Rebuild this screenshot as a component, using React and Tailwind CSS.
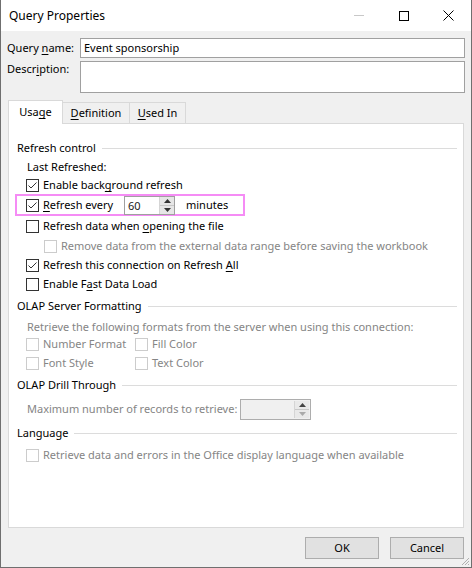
import React from 'react';

const font = { fontFamily: '"Noto Sans", "Segoe UI", Arial, sans-serif' };

const Check = ({ checked, disabled }) => (
  <span
    className={`w-[13px] h-[13px] shrink-0 border bg-white flex items-center justify-center ${
      disabled ? 'border-[#cccccc]' : 'border-[#333333]'
    }`}>
    {checked && (
      <svg width="11" height="11" viewBox="0 0 11 11">
        <path d="M1.5 5.5 L4 8 L9.5 2.5" fill="none" stroke="#333" strokeWidth="1" />
      </svg>
    )}
  </span>
);

const U = ({ children }) => <span className="underline underline-offset-2">{children}</span>;

const GroupHeader = ({ title, h }) => (
  <div className={`flex items-center pl-[8px] pr-[6px] ${h}`}>
    <span className="text-black whitespace-nowrap">{title}</span>
    <div className="flex-1 h-px bg-[#dcdcdc] ml-[6px]" />
  </div>
);

const CheckRow = ({ label, checked, disabled, h, indent = 'pl-[17px]' }) => (
  <div className={`flex items-center gap-[4px] whitespace-nowrap ${h} ${indent}`}>
    <Check checked={checked} disabled={disabled} />
    <span className={disabled ? 'text-[#858585]' : 'text-black'}>{label}</span>
  </div>
);

const Spin = ({ disabled }) => (
  <div className="w-[15px] h-full flex flex-col border-l border-[#d5d5d5]">
    <div className={`flex-1 flex items-center justify-center ${disabled ? 'bg-[#e9e9e9]' : 'bg-[#e6e6e6]'} border-b border-[#c8c8c8]`}>
      <svg width="7" height="4" viewBox="0 0 7 4"><path d="M0 4 L3.5 0 L7 4 Z" fill={disabled ? '#444' : '#333'} /></svg>
    </div>
    <div className={`flex-1 flex items-center justify-center ${disabled ? 'bg-[#e9e9e9]' : 'bg-[#e6e6e6]'}`}>
      <svg width="7" height="4" viewBox="0 0 7 4"><path d="M0 0 L7 0 L3.5 4 Z" fill={disabled ? '#aaa' : '#333'} /></svg>
    </div>
  </div>
);

export default function App() {
  return (
    <div className="w-[472px] h-[568px] bg-[#f0f0f0] border-x border-b border-[#6f6f6f] text-[11px] flex flex-col relative whitespace-nowrap" style={font}>
      {/* title bar */}
      <div className="h-[31px] bg-white flex items-center pl-[8px] shrink-0">
        <span className="text-black flex-1 text-[12px]">Query Properties</span>
        <div className="flex items-center h-full">
          <div className="w-[45px] flex justify-center">
            <div className="w-[10px] h-px bg-[#c8c8c8]" />
          </div>
          <div className="w-[45px] flex justify-center">
            <div className="w-[10px] h-[10px] border border-black" />
          </div>
          <div className="w-[45px] flex justify-center">
            <svg width="11" height="11" viewBox="0 0 11 11">
              <path d="M0.5 0.5 L10.5 10.5 M10.5 0.5 L0.5 10.5" stroke="#000" strokeWidth="1" />
            </svg>
          </div>
        </div>
      </div>

      {/* name + description */}
      <div className="flex flex-col gap-[3px] pt-[7px] pl-[6px] pr-[6px]">
        <div className="flex items-start">
          <span className="w-[73px] shrink-0 leading-[20px]">Query <U>n</U>ame:</span>
          <div className="flex-1 h-[20px] bg-white border border-[#a0a0a0] px-[3px] leading-[18px]">Event sponsorship</div>
        </div>
        <div className="flex items-start">
          <span className="w-[73px] shrink-0 leading-[16px]">Descr<U>i</U>ption:</span>
          <div className="flex-1 h-[32px] bg-white border border-[#a0a0a0]" />
        </div>
      </div>

      {/* tabs */}
      <div className="flex items-end h-[23px] mt-[7px] pl-[7px]">
        <div className="h-[24px] -mb-px w-[55px] bg-white border border-b-0 border-[#d9d9d9] flex items-center justify-center z-10 relative">
          Usa<U>g</U>e
        </div>
        <div className="h-[21px] w-[67px] bg-[#f0f0f0] border border-l-0 border-b-0 border-[#d9d9d9] flex items-center justify-center">
          <U>D</U>efinition
        </div>
        <div className="h-[21px] w-[56px] bg-[#f0f0f0] border border-l-0 border-b-0 border-[#d9d9d9] flex items-center justify-center">
          <U>U</U>sed In
        </div>
      </div>

      {/* panel */}
      <div className="mx-[7px] h-[405px] bg-white border border-[#d9d9d9] pt-[15px] flex flex-col">
        <GroupHeader title="Refresh control" h="h-[19px]" />
        <div className="h-[19px] flex items-center pl-[18px]">Last Refreshed:</div>
        <CheckRow checked h="h-[17px]" label={<>Enable back<U>g</U>round refresh</>} />
        <div className="ml-[6px] w-[230px] h-[22px] border-2 border-[#f58cf5] flex items-center pl-[9px]">
          <Check checked />
          <span className="ml-[4px] w-[81px] shrink-0"><U>R</U>efresh every</span>
          <div className="w-[51px] h-[19px] border border-[#a0a0a0] flex bg-white shrink-0">
            <span className="flex-1 pl-[3px] leading-[17px] text-[#1a1a1a]">60</span>
            <Spin />
          </div>
          <span className="ml-[11px]">minutes</span>
        </div>
        <CheckRow h="h-[21px]" label={<>Refresh data when <U>o</U>pening the file</>} />
        <CheckRow disabled h="h-[19px]" indent="pl-[35px]" label="Remove data from the external data range before saving the workbook" />
        <CheckRow checked h="h-[19px]" label={<>Refresh this connection on Refresh <U>A</U>ll</>} />
        <CheckRow h="h-[19px]" label={<>Enable F<U>a</U>st Data Load</>} />

        <GroupHeader title="OLAP Server Formatting" h="h-[24px]" />
        <div className="h-[18px] flex items-center pl-[18px] text-[#858585]">Retrieve the following formats from the server when using this connection:</div>
        <div className="h-[17px] flex items-center">
          <div className="w-[126px] shrink-0"><CheckRow disabled h="h-[17px]" label="Number Format" /></div>
          <CheckRow disabled h="h-[17px]" indent="pl-0" label="Fill Color" />
        </div>
        <div className="h-[20px] flex items-center">
          <div className="w-[126px] shrink-0"><CheckRow disabled h="h-[20px]" label="Font Style" /></div>
          <CheckRow disabled h="h-[20px]" indent="pl-0" label="Text Color" />
        </div>

        <GroupHeader title="OLAP Drill Through" h="h-[24px]" />
        <div className="h-[24px] flex items-center pl-[18px]">
          <span className="text-[#858585] w-[213px] shrink-0">Maximum number of records to retrieve:</span>
          <div className="w-[71px] h-[21px] border border-[#adadad] flex bg-[#f0f0f0] p-px shrink-0">
            <span className="flex-1" />
            <Spin disabled />
          </div>
        </div>

        <GroupHeader title="Language" h="h-[24px]" />
        <CheckRow disabled h="h-[20px]" label="Retrieve data and errors in the Office display language when available" />
      </div>

      {/* buttons */}
      <div className="flex justify-end gap-[11px] pr-[7px] mt-[9px]">
        <button className="w-[74px] h-[22px] bg-[#e1e1e1] border border-[#adadad] text-black">OK</button>
        <button className="w-[74px] h-[22px] bg-[#e1e1e1] border border-[#adadad] text-black">Cancel</button>
      </div>

      {/* resize grip */}
      <svg className="absolute right-[1px] bottom-[1px]" width="10" height="10" viewBox="0 0 10 10">
        <path d="M9 2 L2 9 M9 5 L5 9 M9 8 L8 9" stroke="#b0b0b0" strokeWidth="1" />
      </svg>
    </div>
  );
}
